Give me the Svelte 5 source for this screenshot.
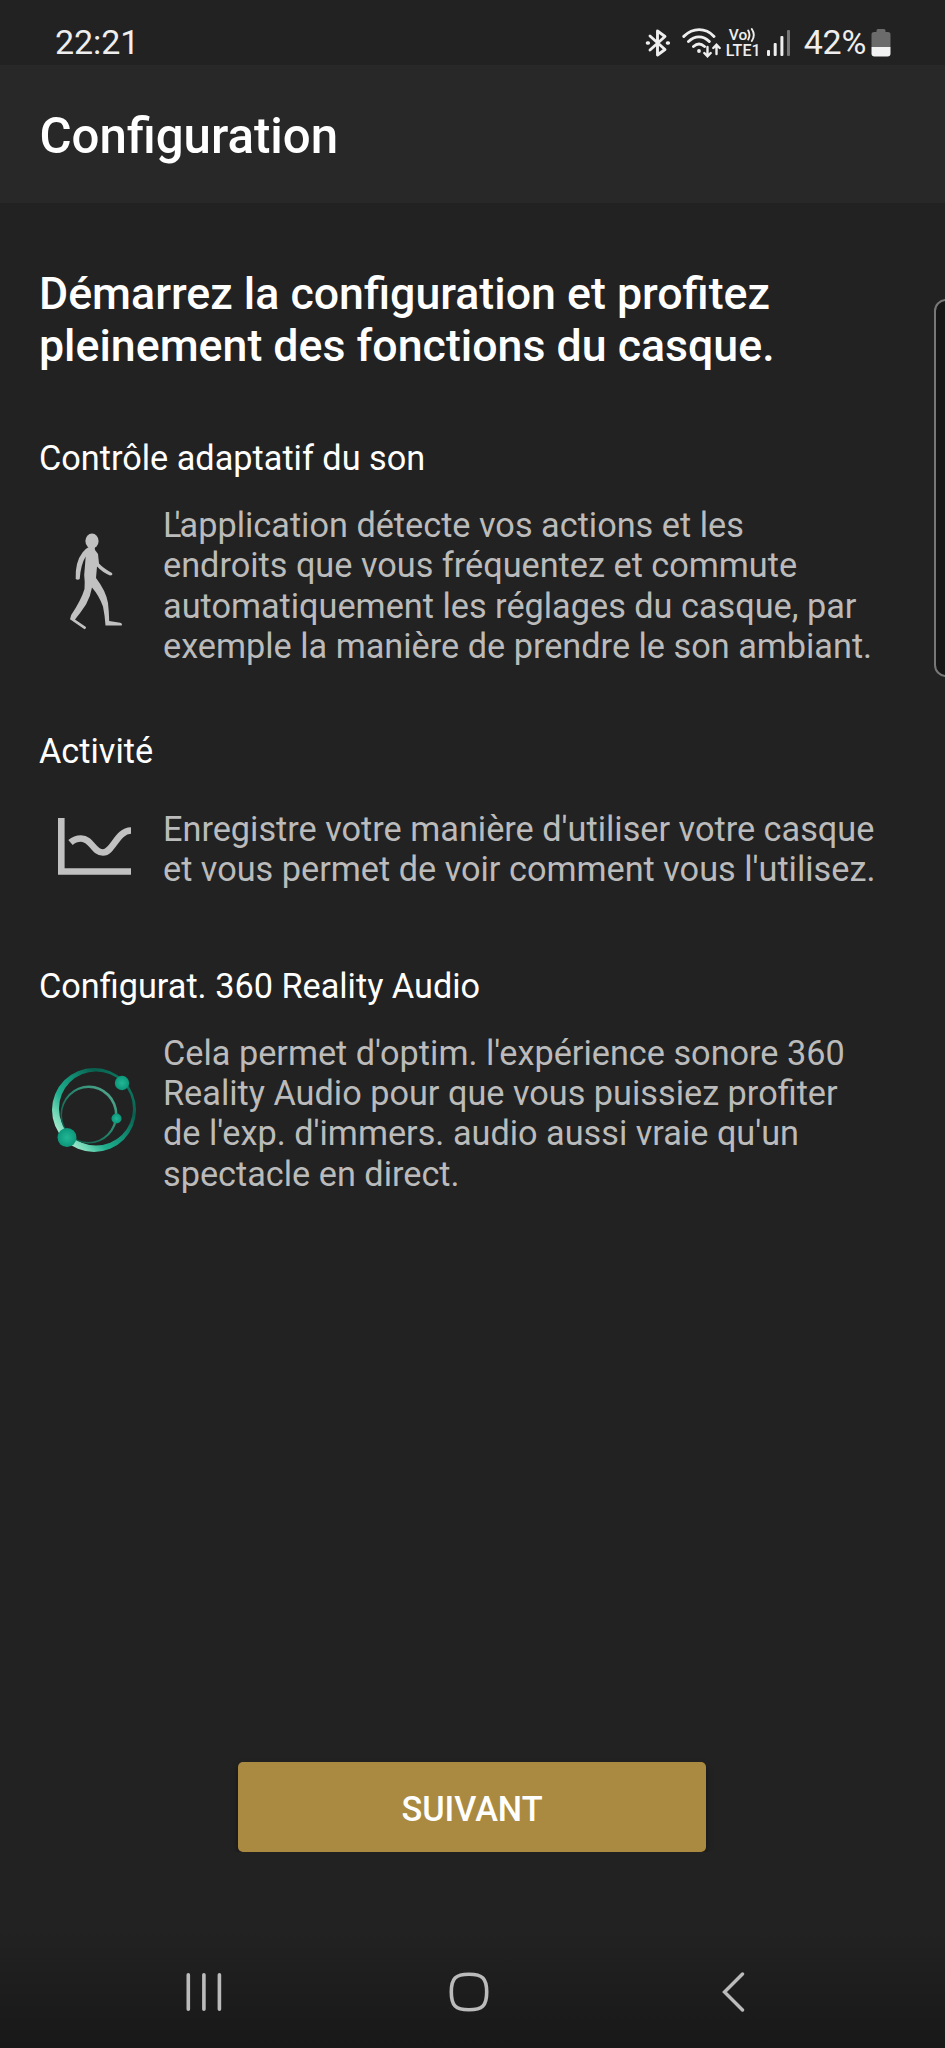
<script lang="ts">
  const features = [
    {
      icon: "walk",
      title: "Contrôle adaptatif du son",
      lines: [
        "L'application détecte vos actions et les",
        "endroits que vous fréquentez et commute",
        "automatiquement les réglages du casque, par",
        "exemple la manière de prendre le son ambiant.",
      ],
    },
    {
      icon: "chart",
      title: "Activité",
      lines: [
        "Enregistre votre manière d'utiliser votre casque",
        "et vous permet de voir comment vous l'utilisez.",
      ],
    },
    {
      icon: "orbit",
      title: "Configurat. 360 Reality Audio",
      lines: [
        "Cela permet d'optim. l'expérience sonore 360",
        "Reality Audio pour que vous puissiez profiter",
        "de l'exp. d'immers. audio aussi vraie qu'un",
        "spectacle en direct.",
      ],
    },
  ];
</script>

<div class="screen">
  <div class="status">
    <span class="time">22:21</span>
    <div class="indicators">
      <svg class="bluetooth" width="26" height="30" viewBox="0 0 26 30" fill="none" stroke="#eee" stroke-width="2.9" stroke-linejoin="round" stroke-linecap="round">
        <path d="M5 8 20 21.5 12.5 27V3L20 8.5 5 22" />
        <path d="M2.500 15h.8M22.500 15h.8" stroke-width="3.6" />
      </svg>
      <svg class="wifi" width="40" height="30" viewBox="0 0 40 30" fill="none" stroke="#eee" stroke-width="2.9" stroke-linecap="round">
        <path d="M1.800 8.400C11-.6 23.500-.6 32 8.400M6.500 13.500c6.500-6.200 14.500-6.200 20.800 0M11.500 18.500c3.500-3.200 7.500-3.200 11 0" />
        <circle cx="17" cy="23" r="1.900" fill="#eee" stroke="none" />
        <path d="M25.500 19v9M22.300 25l3.200 3.300 3.200-3.300M34.500 26v-9M31.300 20l3.200-3.300 3.200 3.300" stroke-width="2.400" />
      </svg>
      <div class="volte">
        <span class="vo">Vo<svg width="9" height="14" viewBox="0 0 9 14" fill="none" stroke="#eee" stroke-width="1.900" stroke-linecap="round"><path d="M1.200 2.500q2.600 4.500 0 9M4.800 1q4 6 0 12" /></svg></span>
        <span class="lte">LTE1</span>
      </div>
      <svg class="signal" width="24" height="26" viewBox="0 0 24 26" fill="#eee">
        <rect x="0" y="20" width="3" height="6" rx="1" />
        <rect x="6.700" y="13" width="3" height="13" rx="1" />
        <rect x="13.400" y="6" width="3" height="20" rx="1" />
        <rect x="20" y="0" width="3" height="26" rx="1" fill="#777" />
      </svg>
      <span class="percent">42%</span>
      <svg class="battery" width="20" height="28" viewBox="0 0 20 28">
        <path fill="#6b6b6b" d="M5.500 1.500Q5.500 0 7 0h6q1.500 0 1.500 1.500V3H17q2.500 0 2.500 2.500V18H.5V5.500Q.5 3 3 3h2.500Z" />
        <path fill="#f2f2f2" d="M.5 18h19v6.500q0 3-3 3h-13q-3 0-3-3Z" />
      </svg>
    </div>
  </div>

  <header>
    <h1>Configuration</h1>
  </header>

  <main>
    <h2>Démarrez la configuration et profitez<br />pleinement des fonctions du casque.</h2>

    {#each features as feature}
      <section class={feature.icon}>
        <h3>{feature.title}</h3>
        <div class="row">
          <div class="icon">
            {#if feature.icon === "walk"}
              <svg width="54" height="100" viewBox="0 0 54 100" fill="#c1c1c1">
                <ellipse cx="23" cy="8" rx="6.600" ry="7.500" />
                <path d="M20.500 13h5l.5 4 3 4 1 9.500q4 4.500 13 9.500 1.200 2.500-2 2.500-8-3.500-13-9l-1 11.500q10 13 12 25 1 9 1.200 18l11 1.700q2.500.8 1.500 2.800H36.500q-.5-9-2.500-19-4-11-11-19-1.500 9-6 17-6 9-11 15l11 7.500q.5 1.500-1.500 2.300L1 86.300 2.200 82q10-15 13.300-26 .500-8-.3-14l1.500-18.500q-5 8-6 22.500-1.800 1.500-4 0Q6 29 13.500 19.500q3-4 7-6Z" />
              </svg>
            {:else if feature.icon === "chart"}
              <svg width="74" height="60" viewBox="0 0 74 60" fill="none" stroke="#c1c1c1" stroke-width="6.600">
                <path d="M4.300 1v53.500H74" />
                <path d="M13.500 25.500Q18 21.500 24 21.500C35 21.500 36 35.500 46 35.500S60 13.500 74 13.500" />
              </svg>
            {:else}
              <svg width="86" height="86" viewBox="0 0 86 86">
                <defs>
                  <linearGradient id="ring" x1=".1" y1=".85" x2=".9" y2=".15">
                    <stop offset="0" stop-color="#b4efd6" />
                    <stop offset=".16" stop-color="#6fd6b5" />
                    <stop offset=".32" stop-color="#1fae8e" />
                    <stop offset=".55" stop-color="#128f75" />
                    <stop offset=".8" stop-color="#08604e" />
                    <stop offset="1" stop-color="#0b7a63" />
                  </linearGradient>
                  <linearGradient id="orbit" x1="0" y1="1" x2="1" y2="0">
                    <stop offset="0" stop-color="#06483b" />
                    <stop offset=".55" stop-color="#278870" />
                    <stop offset="1" stop-color="#5fae95" />
                  </linearGradient>
                  <radialGradient id="ball">
                    <stop offset="0" stop-color="#22b795" />
                    <stop offset="1" stop-color="#0c967a" />
                  </radialGradient>
                </defs>
                <path fill="url(#ring)" fill-rule="evenodd" d="M43 1a42 42 0 1 0 0 84 42 42 0 1 0 0-84ZM45 4.500a37 37 0 1 1 0 74 37 37 0 1 1 0-74Z" />
                <path fill="url(#orbit)" fill-rule="evenodd" d="M38 18.500a28.500 29 0 1 1 0 58 28.500 29 0 1 1 0-58ZM37.500 21a26.500 27 0 1 0 0 54 26.500 27 0 1 0 0-54Z" />
                <g fill="url(#ball)">
                  <circle cx="71" cy="16" r="7.200" />
                  <circle cx="65.500" cy="51.500" r="5" />
                  <circle cx="16" cy="70.500" r="9.500" />
                </g>
              </svg>
            {/if}
          </div>
          <p>
            {#each feature.lines as line}
              {#if line.startsWith("L'")}
                <span class="line"><span class="kern">L</span>{line.slice(1)}</span>
              {:else}
                <span class="line">{line}</span>
              {/if}
            {/each}
          </p>
        </div>
      </section>
    {/each}
  </main>

  <button>SUIVANT</button>

  <nav>
    <svg width="38" height="40" viewBox="0 0 38 40" stroke="#bbb" stroke-width="3.600" stroke-linecap="round">
      <path d="M3.300 2.800v34.400M18.900 2.800v34.400M34.400 2.800v34.400" />
    </svg>
    <svg width="40" height="40" viewBox="0 0 40 40" fill="none" stroke="#bbb" stroke-width="3.600">
      <path d="M20 2.200C33.500 2.200 37.700 6.400 37.700 20S33.500 37.800 20 37.800 2.300 33.600 2.300 20 6.500 2.200 20 2.200Z" />
    </svg>
    <svg width="24" height="40" viewBox="0 0 24 40" fill="none" stroke="#bbb" stroke-width="3.400" stroke-linecap="round">
      <path d="M21.500 2 3.500 20l18 18" />
    </svg>
  </nav>

  <div class="edge-panel"></div>
</div>

<style>
  :global(body) { background: #222; }
  .screen {
    position: relative;
    display: flex;
    overflow: hidden;
    flex-direction: column;
    width: 945px;
    height: 2048px;
    color: #fff;
    font-family: Roboto, sans-serif;
    background: #222;
  }
  h1, h2, h3, p { margin: 0; font-weight: 400; white-space: nowrap; }
  .status {
    display: flex;
    justify-content: space-between;
    height: 65px;
    padding: 0 54px 0 55px;
    color: #eee;
  }
  .time { margin-top: 22px; font-size: 34px; line-height: 40px; letter-spacing: -.1px; }
  .indicators { display: flex; align-items: flex-start; }
  .bluetooth { margin: 28px 11px 0 0; }
  .wifi { margin: 28px 4px 0 0; }
  .volte { display: flex; flex-direction: column; width: 34px; margin: 28px 7px 0 0; font-weight: 500; }
  .vo { padding-left: 3px; font-size: 15.500px; line-height: 15px; }
  .vo svg { vertical-align: -2px; }
  .lte { font-size: 16px; line-height: 16px; letter-spacing: .1px; }
  .signal { margin: 30px 13px 0 0; }
  .percent { margin-top: 22px; font-size: 34px; line-height: 40px; letter-spacing: -.3px; }
  .battery { margin: 29px 0 0 5px; }
  header { height: 138px; padding-left: 39.500px; background: #282828; }
  h1 { padding-top: 43px; font-size: 49.200px; font-weight: 500; line-height: 56px; }
  main { height: 1559px; padding: 66px 0 0 39px; box-sizing: border-box; }
  h2 { font-size: 44.700px; font-weight: 500; line-height: 51.500px; }
  h3 { font-size: 34.250px; line-height: 40px; }
  section.walk { margin-top: 66px; }
  section.chart { margin-top: 65px; }
  section.orbit { margin-top: 76px; }
  .row { display: flex; margin-top: 27px; }
  .chart .row { margin-top: 38px; }
  .icon { display: flex; width: 124px; box-sizing: border-box; }
  .walk .icon { padding: 28px 0 0 30px; }
  .chart .icon { padding: 8px 0 0 18px; }
  .orbit .icon { padding: 34px 0 0 12px; }
  p { color: #bbb; font-size: 34.250px; line-height: 40.300px; }
  .line { display: block; }
  .kern { letter-spacing: -7px; }
  button {
    align-self: center;
    width: 468px;
    height: 90px;
    margin-right: 1px;
    padding: 3px 0 0;
    color: #fff;
    font: 500 34.250px/40px Roboto, sans-serif;
    background: #aa8a40;
    border: 0;
    border-radius: 5px;
    box-shadow: 0 3px 6px #0006;
  }
  nav {
    display: flex;
    flex: 1;
    gap: 226px;
    align-items: flex-end;
    padding: 0 0 36px 185px;
    background: linear-gradient(#222 40%, #181818);
  }
  nav svg:last-child { margin-left: 6px; }
  .edge-panel {
    position: absolute;
    top: 299px;
    right: -21px;
    width: 28px;
    height: 374px;
    background: #161616;
    border: 2px solid #777;
    border-radius: 12px;
  }
</style>
